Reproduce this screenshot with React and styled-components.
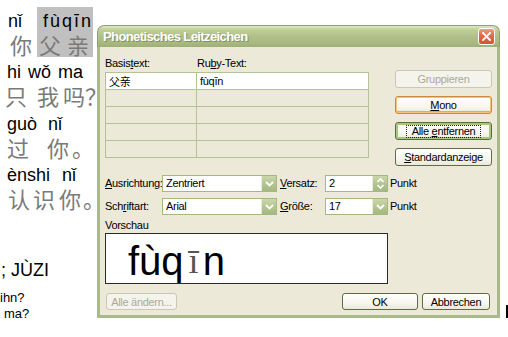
import React from 'react';
import styled, { createGlobalStyle, css } from 'styled-components';

const Global = createGlobalStyle`
  html, body { margin: 0; padding: 0; background: #fff; }
  body { font-family: "Liberation Sans", Arial, sans-serif; }
`;

const Page = styled.div`
  display: flex;
  align-items: flex-start;
  width: 508px;
  height: 337px;
  overflow: hidden;
  background: #fff;
`;

/* ---------- document behind the dialog ---------- */
const Doc = styled.div`
  width: 97px;
  height: 318px;
  flex-shrink: 0;
  overflow: hidden;
  display: flex;
  flex-direction: column;
`;

const Block = styled.div`
  display: flex;
  margin-top: ${p => p.$mt || 0}px;
  height: 50px;
`;

const Group = styled.div`
  display: flex;
  flex-direction: column;
  width: ${p => (p.$w ? `${p.$w}px` : 'auto')};
  padding-top: 4px;
  background: ${p => (p.$hl ? '#c0c0c0' : 'transparent')};
`;

const Py = styled.div`
  height: 20px;
  line-height: 20px;
  font-family: "Liberation Sans", Arial, sans-serif;
  font-size: 18px;
  color: #000;
  white-space: pre;
  display: flex;
`;

const PySeg = styled.span`
  margin-left: ${p => p.$ml || 0}px;
  letter-spacing: ${p => p.$ls || 0}px;
  word-spacing: ${p => p.$ws || 0}px;
`;

const Hz = styled.div`
  height: 26px;
  line-height: 26px;
  font-family: "Noto Sans CJK SC", sans-serif;
  font-size: 22px;
  color: #7a7a7a;
  display: flex;
  white-space: nowrap;
`;

const Ch = styled.span`
  display: inline-block;
  width: 24px;
  text-align: center;
  margin-left: ${p => p.$ml || 0}px;
`;

const Heading = styled.div`
  margin-top: 49px;
  height: 20px;
  line-height: 20px;
  font-size: 18px;
  color: #000;
  white-space: pre;
  padding-left: 1px;
`;

const SmallLine = styled.div`
  margin-top: ${p => p.$mt || 0}px;
  padding-left: ${p => p.$pl || 0}px;
  height: 16px;
  line-height: 16px;
  font-size: 13px;
  color: #000;
  white-space: pre;
`;

/* ---------- dialog ---------- */
const Dialog = styled.div`
  flex-shrink: 0;
  width: 403px;
  height: 293px;
  margin-top: 25px;
  display: flex;
  flex-direction: column;
`;

const TitleBar = styled.div`
  height: 22px;
  box-sizing: border-box;
  border-radius: 7px 7px 0 0;
  border: 1px solid #8fa26a;
  border-bottom: none;
  background: linear-gradient(to bottom, #dfe7c4 0%, #c0cd9b 18%, #b1c088 50%, #a8b880 82%, #9dae76 100%);
  display: flex;
  align-items: center;
  justify-content: space-between;
  padding: 0 4px 0 5px;
`;

const Title = styled.span`
  color: #fff;
  font-family: "Liberation Sans", Arial, sans-serif;
  font-weight: bold;
  font-size: 13px;
  letter-spacing: -0.6px;
  text-shadow: 1px 1px 0 #7f9160;
`;

const CloseBtn = styled.div`
  width: 17px;
  height: 17px;
  box-sizing: border-box;
  border: 1px solid #fff;
  border-radius: 3px;
  background: linear-gradient(to bottom, #eea07e 0%, #de6f48 40%, #cf5630 100%);
  display: flex;
  align-items: center;
  justify-content: center;
`;

const Body = styled.div`
  flex: 1;
  box-sizing: border-box;
  background: #ece9d8;
  border: 3px solid #a8ba89;
  border-top: none;
  padding: 9px 5px 0 5px;
  display: flex;
  flex-direction: column;
  font-size: 11px;
  letter-spacing: -0.3px;
  color: #000;
`;

const U = styled.span`
  text-decoration: underline;
`;

const TopSection = styled.div`
  display: flex;
  gap: 26px;
`;

const TableArea = styled.div`
  width: 264px;
  display: flex;
  flex-direction: column;
`;

const LabelRow = styled.div`
  display: flex;
  height: 16px;
  line-height: 14px;
`;

const ColLabel = styled.span`
  width: ${p => p.$w}px;
`;

const Table = styled.div`
  display: grid;
  grid-template-columns: 91px 172px;
  border-top: 1px solid #b3c397;
  border-left: 1px solid #b3c397;
`;

const Cell = styled.div`
  box-sizing: border-box;
  height: 17px;
  line-height: 16px;
  padding-left: 3px;
  border-right: 1px solid #b3c397;
  border-bottom: 1px solid #b3c397;
  background: ${p => (p.$white ? '#fff' : 'transparent')};
  font-family: ${p => (p.$cjk ? '"Noto Sans CJK SC", sans-serif' : '"Liberation Sans", Arial, sans-serif')};
  font-size: 11px;
  white-space: nowrap;
`;

const ButtonCol = styled.div`
  width: 97px;
  padding-top: 14px;
  display: flex;
  flex-direction: column;
  gap: 8px;
`;

const Btn = styled.div`
  box-sizing: border-box;
  width: ${p => (p.$w ? `${p.$w}px` : '100%')};
  height: ${p => p.$h || 18}px;
  border: 1px solid #5d6e46;
  border-radius: 3px;
  background: linear-gradient(to bottom, #ffffff 0%, #f7f6f0 60%, #ebe9dc 100%);
  display: flex;
  align-items: center;
  justify-content: center;
  font-size: 11px;
  color: #000;
  white-space: pre;
  ${p => p.$variant === 'disabled' && css`
    border-color: #c9c7ba;
    color: #aca899;
    background: #f5f4ec;
  `}
  ${p => p.$variant === 'hot' && css`
    border-color: #c98a3a;
    box-shadow: inset 0 0 0 1px #f6c27a, inset 0 -2px 0 #f0a94a;
  `}
  ${p => p.$variant === 'default' && css`
    border-color: #56703a;
    box-shadow: inset 0 0 0 2px #a9c47f;
  `}
`;

const Focus = styled.span`
  display: inline-block;
  border: 1px dotted #222;
  padding: 0 5px;
  line-height: 11px;
  white-space: pre;
`;

const Fields = styled.div`
  margin-top: 9px;
  display: grid;
  grid-template-columns: 57px 118px 45px 65px auto;
  grid-auto-rows: 17px;
  row-gap: 6px;
  align-items: center;
`;

const FieldLabel = styled.span`
  line-height: 17px;
  white-space: nowrap;
`;

const Combo = styled.div`
  box-sizing: border-box;
  width: ${p => p.$w}px;
  height: 17px;
  border: 1px solid #a4b97f;
  background: #fff;
  display: flex;
  align-items: stretch;
`;

const ComboValue = styled.span`
  flex: 1;
  padding-left: 3px;
  line-height: 15px;
`;

const DropBtn = styled.span`
  width: 14px;
  background: linear-gradient(to bottom, #cbd7ab 0%, #b3c48f 55%, #a5b882 100%);
  border-left: 1px solid #e8eedb;
  display: flex;
  align-items: center;
  justify-content: center;
`;

const PreviewLabel = styled.div`
  margin-top: 4px;
  height: 12px;
  line-height: 12px;
`;

const Preview = styled.div`
  margin-top: 2px;
  box-sizing: border-box;
  width: 283px;
  height: 51px;
  border: 1px solid #2a2a2a;
  background: #fff;
  overflow: hidden;
  padding: 2px 0 0 22px;
  display: flex;
  align-items: flex-start;
  line-height: 50px;
  font-family: "Liberation Sans", Arial, sans-serif;
  font-size: 40px;
  letter-spacing: 0;
  color: #000;
  white-space: pre;
`;

const PreviewMacron = styled.span`
  margin: 0 4px 0 5px;
  font-family: "Liberation Serif", "Times New Roman", serif;
  font-size: 36px;
  color: #555;
`;

const BottomRow = styled.div`
  margin-top: 9px;
  display: flex;
  justify-content: space-between;
  padding: 0 2px 0 1px;
`;

const BtnGroup = styled.div`
  display: flex;
  gap: 4px;
`;

const Cursor = styled.div`
  flex-shrink: 0;
  width: 2px;
  height: 13px;
  margin: 305px 0 0 6px;
  background: #000;
`;

const Chevron = () => (
  <svg width="9" height="6" viewBox="0 0 9 6">
    <path d="M1 1 L4.5 4.5 L8 1" fill="none" stroke="#fff" strokeWidth="1.8" />
  </svg>
);

const SpinArrows = () => (
  <svg width="9" height="13" viewBox="0 0 9 13">
    <path d="M1.5 5 L4.5 2 L7.5 5" fill="none" stroke="#fff" strokeWidth="1.6" />
    <path d="M1.5 8 L4.5 11 L7.5 8" fill="none" stroke="#fff" strokeWidth="1.6" />
  </svg>
);

const CloseX = () => (
  <svg width="9" height="9" viewBox="0 0 9 9">
    <path d="M1 1 L8 8 M8 1 L1 8" stroke="#fff" strokeWidth="1.9" strokeLinecap="square" />
  </svg>
);

export default function App() {
  return (
    <Page>
      <Global />
      <Doc>
        <Block $mt={7}>
          <Group $w={37}>
            <Py><PySeg $ml={8}>nǐ</PySeg></Py>
            <Hz><Ch $ml={9}>你</Ch></Hz>
          </Group>
          <Group $w={56} $hl>
            <Py><PySeg $ml={6} $ls={2}>fùqīn</PySeg></Py>
            <Hz><Ch $ml={1}>父</Ch><Ch $ml={4}>亲</Ch></Hz>
          </Group>
        </Block>
        <Block $mt={1}>
          <Group>
            <Py><PySeg $ml={7} $ws={2}>hi wǒ ma</PySeg></Py>
            <Hz><Ch $ml={4}>只</Ch><Ch $ml={8}>我</Ch><Ch $ml={2}>吗</Ch><Ch $ml={-2}>？</Ch></Hz>
          </Group>
        </Block>
        <Block $mt={2}>
          <Group>
            <Py><PySeg $ml={7}>guò</PySeg><PySeg $ml={11}>nǐ</PySeg></Py>
            <Hz><Ch $ml={6}>过</Ch><Ch $ml={16}>你</Ch><Ch $ml={1}>。</Ch></Hz>
          </Group>
        </Block>
        <Block $mt={1}>
          <Group>
            <Py><PySeg $ml={7}>ènshi</PySeg><PySeg $ml={12}>nǐ</PySeg></Py>
            <Hz><Ch $ml={7}>认</Ch><Ch $ml={1}>识</Ch><Ch $ml={2}>你</Ch><Ch $ml={0}>。</Ch></Hz>
          </Group>
        </Block>
        <Heading>; JÙZI</Heading>
        <SmallLine $mt={10} $pl={0}>ihn?</SmallLine>
        <SmallLine $pl={4}>ma?</SmallLine>
      </Doc>

      <Dialog>
        <TitleBar>
          <Title>Phonetisches Leitzeichen</Title>
          <CloseBtn><CloseX /></CloseBtn>
        </TitleBar>
        <Body>
          <TopSection>
            <TableArea>
              <LabelRow>
                <ColLabel $w={92}>Basis<U>t</U>ext:</ColLabel>
                <ColLabel $w={172}>Ru<U>b</U>y-Text:</ColLabel>
              </LabelRow>
              <Table>
                <Cell $white $cjk>父亲</Cell>
                <Cell $white>fùqīn</Cell>
                {[0, 1, 2, 3].map(i => (
                  <React.Fragment key={i}>
                    <Cell />
                    <Cell />
                  </React.Fragment>
                ))}
              </Table>
            </TableArea>
            <ButtonCol>
              <Btn $variant="disabled">Gruppieren</Btn>
              <Btn $variant="hot"><U>M</U>ono</Btn>
              <Btn $variant="default"><Focus>Alle <U>e</U>ntfernen</Focus></Btn>
              <Btn><U>S</U>tandardanzeige</Btn>
            </ButtonCol>
          </TopSection>

          <Fields>
            <FieldLabel><U>A</U>usrichtung:</FieldLabel>
            <Combo $w={115}>
              <ComboValue>Zentriert</ComboValue>
              <DropBtn><Chevron /></DropBtn>
            </Combo>
            <FieldLabel><U>V</U>ersatz:</FieldLabel>
            <Combo $w={63}>
              <ComboValue>2</ComboValue>
              <DropBtn><SpinArrows /></DropBtn>
            </Combo>
            <FieldLabel>Punkt</FieldLabel>

            <FieldLabel>Sch<U>r</U>iftart:</FieldLabel>
            <Combo $w={115}>
              <ComboValue>Arial</ComboValue>
              <DropBtn><Chevron /></DropBtn>
            </Combo>
            <FieldLabel><U>G</U>röße:</FieldLabel>
            <Combo $w={63}>
              <ComboValue>17</ComboValue>
              <DropBtn><Chevron /></DropBtn>
            </Combo>
            <FieldLabel>Punkt</FieldLabel>
          </Fields>

          <PreviewLabel>Vorschau</PreviewLabel>
          <Preview>
            <span>fùq</span>
            <PreviewMacron>ī</PreviewMacron>
            <span>n</span>
          </Preview>

          <BottomRow>
            <Btn $variant="disabled" $w={71} $h={17}>Alle ändern...</Btn>
            <BtnGroup>
              <Btn $w={76} $h={17}>OK</Btn>
              <Btn $w={68} $h={17}>Abbrechen</Btn>
            </BtnGroup>
          </BottomRow>
        </Body>
      </Dialog>
      <Cursor />
    </Page>
  );
}
